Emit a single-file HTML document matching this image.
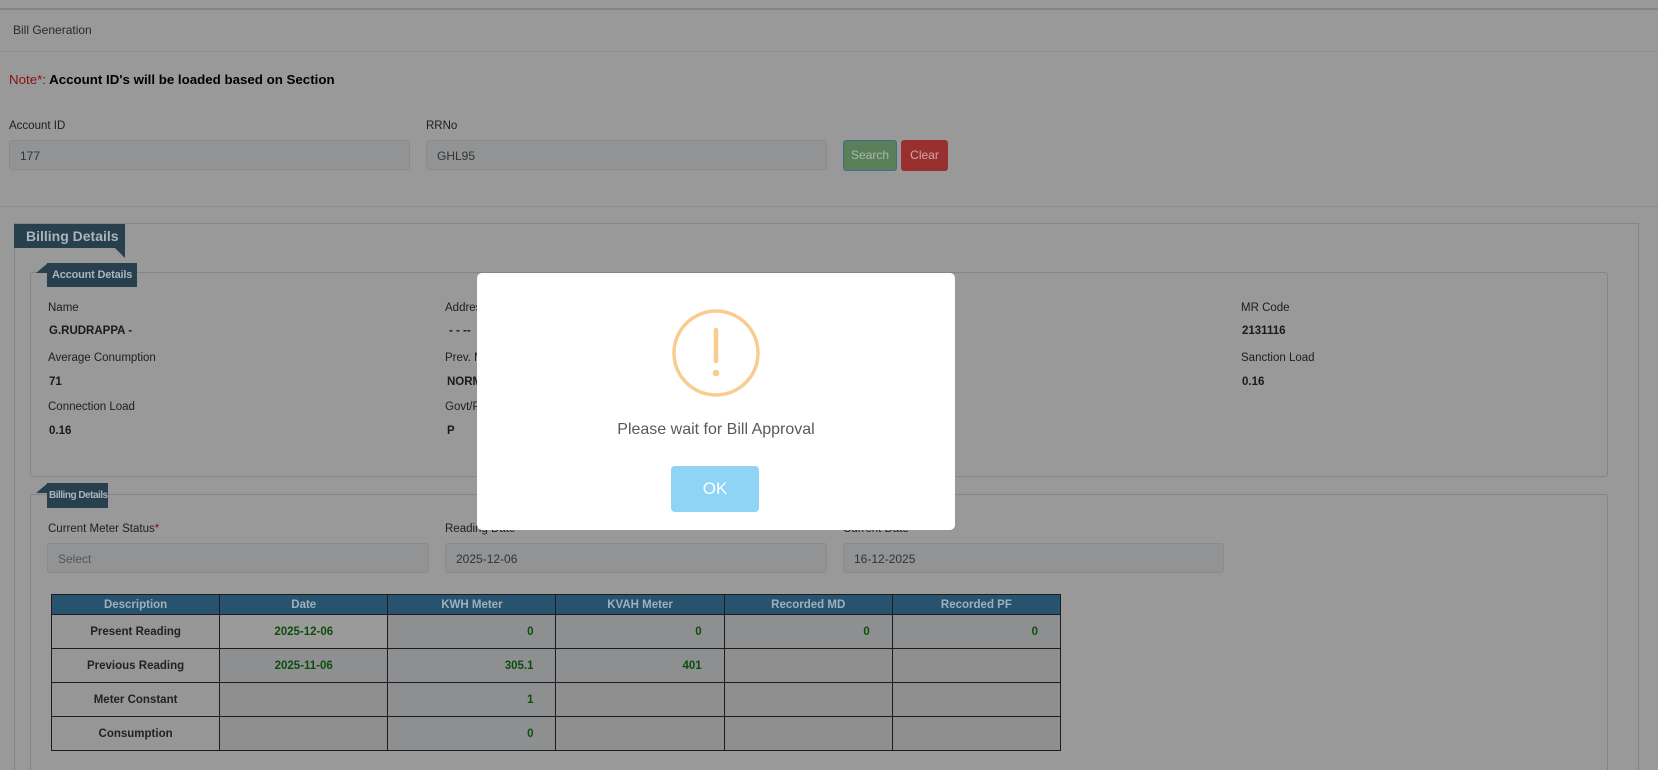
<!DOCTYPE html>
<html style="overflow:hidden;height:770px"><head><meta charset="utf-8"><style>
*{box-sizing:border-box;margin:0;padding:0}
html,body{width:1658px;height:770px;overflow:hidden}
body{background:#999;font-family:"Liberation Sans",Arial,sans-serif;position:relative;color:#222}
#w{position:absolute;left:0;top:0;width:1658px;height:770px;overflow:hidden}
.a{position:absolute}
.lbl{font-size:11.5px;color:#1e1e1e}
.val{font-size:11.5px;font-weight:bold;color:#1a1a1a}
.inp{position:absolute;height:30px;border:1px solid #8a8a8a;border-radius:3px;background:#929394;font-size:12px;color:#333;padding:8px 10px}
.line{position:absolute;height:1px;background:#8c8c8c}
.tag{position:absolute;background:#283f4e;color:#aab4bb;font-weight:bold;white-space:nowrap;overflow:hidden}
table{position:absolute;left:51px;top:594px;border-collapse:collapse;font-size:11.5px;table-layout:fixed;width:1010px}
td,th{border:1px solid #1c1c1c;height:34px;text-align:center}
th{height:20px;background:#27536f;color:#9fb0bd;font-weight:bold}
td{background:#969696;font-weight:bold;color:#222}
td.g{color:#0d4d0d;text-align:right;padding-right:22px;background:#8e8f90}
td.c{text-align:center;padding:0}
td.e{background:#8f8f8f}
</style></head><body><div id="w">
<div class="line" style="top:8px;left:0;width:1658px;height:2px;background:#858585"></div>
<div class="a" style="left:13px;top:23px;font-size:12px;color:#2a2a2a">Bill Generation</div>
<div class="line" style="top:51px;left:0;width:1658px;background:#8e8e8e"></div>
<div class="a" style="left:9px;top:72px;font-size:13.3px;font-weight:bold;color:#000"><span style="color:#8b0f0f;font-weight:normal">Note*:</span> Account ID's will be loaded based on Section</div>
<div class="a lbl" style="left:9px;top:120px">Account ID</div>
<div class="a lbl" style="left:426px;top:120px">RRNo</div>
<div class="inp" style="left:9px;top:140px;width:401px">177</div>
<div class="inp" style="left:426px;top:140px;width:401px">GHL95</div>
<div class="a" style="left:843px;top:140px;width:54px;height:31px;background:#5a7f5a;border:1px solid #3c6f8e;border-radius:3px;color:#a9b7a9;font-size:12px;text-align:center;line-height:29px">Search</div>
<div class="a" style="left:901px;top:140px;width:47px;height:31px;background:#9a2f2f;border-radius:3px;color:#cfa9a9;font-size:12px;text-align:center;line-height:31px">Clear</div>
<div class="line" style="top:206px;left:0;width:1658px"></div>
<div class="a" style="left:14px;top:223px;width:1625px;height:547px;border:1px solid #858585;border-bottom:none"></div>
<div class="tag" style="left:14px;top:224px;width:111px;height:24px;font-size:14px;padding:4px 12px">Billing Details</div>
<div class="a" style="left:115px;top:248px;width:0;height:0;border-top:10px solid #283f4e;border-left:10px solid transparent"></div>
<div class="a" style="left:30px;top:272px;width:1578px;height:205px;border:1px solid #858585;border-radius:3px"></div>
<div class="a" style="left:36px;top:263px;width:0;height:0;border-bottom:10px solid #283f4e;border-left:12px solid transparent"></div>
<div class="tag" style="left:47px;top:263px;width:90px;height:24px;font-size:11px;padding:6px 5px;letter-spacing:-0.2px">Account Details</div>
<div class="a lbl" style="left:48px;top:302px">Name</div><div class="a val" style="left:49px;top:325px">G.RUDRAPPA -</div>
<div class="a lbl" style="left:445px;top:302px">Address</div><div class="a val" style="left:449px;top:325px">- - --</div>
<div class="a lbl" style="left:1241px;top:302px">MR Code</div><div class="a val" style="left:1242px;top:325px">2131116</div>
<div class="a lbl" style="left:48px;top:352px">Average Conumption</div><div class="a val" style="left:49px;top:376px">71</div>
<div class="a lbl" style="left:445px;top:352px">Prev. MR</div><div class="a val" style="left:447px;top:376px">NORMAL</div>
<div class="a lbl" style="left:1241px;top:352px">Sanction Load</div><div class="a val" style="left:1242px;top:376px">0.16</div>
<div class="a lbl" style="left:48px;top:401px">Connection Load</div><div class="a val" style="left:49px;top:425px">0.16</div>
<div class="a lbl" style="left:445px;top:401px">Govt/Pvt</div><div class="a val" style="left:447px;top:425px">P</div>
<div class="a" style="left:30px;top:494px;width:1578px;height:276px;border:1px solid #858585;border-bottom:none;border-radius:3px 3px 0 0"></div>
<div class="a" style="left:36px;top:483px;width:0;height:0;border-bottom:10px solid #283f4e;border-left:12px solid transparent"></div>
<div class="tag" style="left:47px;top:483px;width:61px;height:25px;font-size:10px;padding:7px 2px;letter-spacing:-0.5px">Billing Details</div>
<div class="a lbl" style="left:48px;top:523px">Current Meter Status<span style="color:#8b0f0f">*</span></div>
<div class="a lbl" style="left:445px;top:523px">Reading Date</div>
<div class="a lbl" style="left:843px;top:523px">Current Date</div>
<div class="inp" style="left:47px;top:543px;width:382px;color:#555">Select</div>
<div class="inp" style="left:445px;top:543px;width:382px">2025-12-06</div>
<div class="inp" style="left:843px;top:543px;width:381px">16-12-2025</div>
<table>
<tr><th>Description</th><th>Date</th><th>KWH Meter</th><th>KVAH Meter</th><th>Recorded MD</th><th>Recorded PF</th></tr>
<tr><td>Present Reading</td><td class="g c" style="background:#9a9a9a">2025-12-06</td><td class="g">0</td><td class="g">0</td><td class="g">0</td><td class="g">0</td></tr>
<tr><td>Previous Reading</td><td class="g c">2025-11-06</td><td class="g">305.1</td><td class="g">401</td><td class="e"></td><td class="e"></td></tr>
<tr><td>Meter Constant</td><td class="e"></td><td class="g">1</td><td class="e"></td><td class="e"></td><td class="e"></td></tr>
<tr><td>Consumption</td><td class="e"></td><td class="g">0</td><td class="e"></td><td class="e"></td><td class="e"></td></tr>
</table>
<div class="a" style="left:477px;top:273px;width:478px;height:257px;background:#fff;border-radius:5px">
<svg class="a" style="left:194px;top:35px" width="90" height="90" viewBox="0 0 90 90"><circle cx="45" cy="45" r="42" fill="none" stroke="#f8cd8f" stroke-width="3.5"/><line x1="45" y1="22" x2="45" y2="53" stroke="#f8cd8f" stroke-width="4.5" stroke-linecap="round"/><circle cx="45" cy="65" r="3.3" fill="#f8cd8f"/></svg>
<div class="a" style="left:0;top:148px;width:478px;text-align:center;font-size:16px;color:#595959">Please wait for Bill Approval</div>
<div class="a" style="left:194px;top:193px;width:88px;height:46px;background:#8fd4f5;border-radius:4px;color:#fff;font-size:17px;text-align:center;line-height:46px">OK</div>
</div>
</div></body></html>
